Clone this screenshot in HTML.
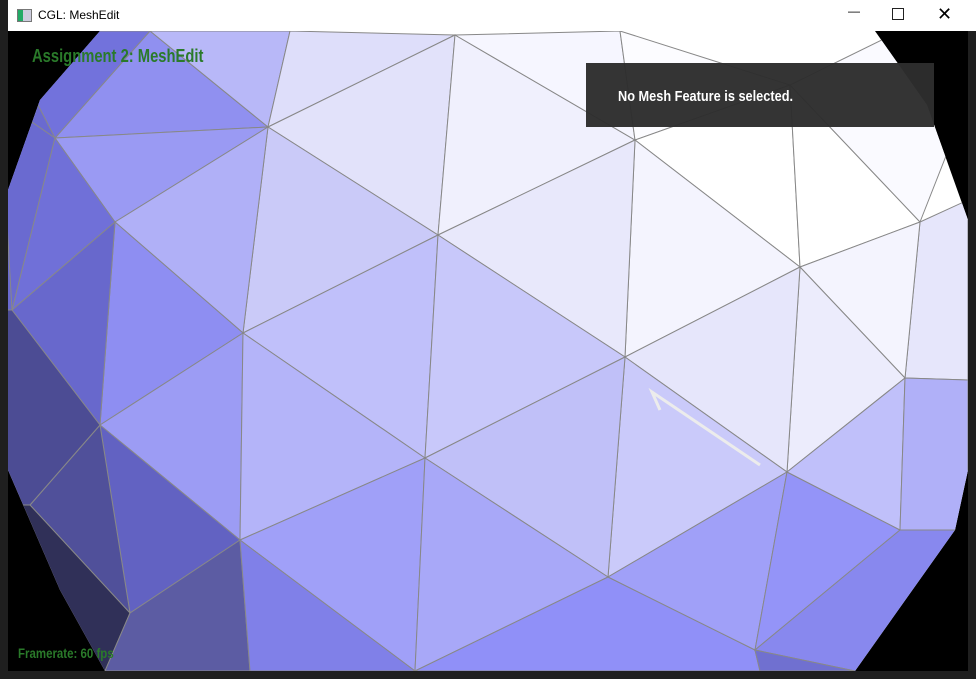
<!DOCTYPE html>
<html><head><style>
html,body{margin:0;padding:0;width:976px;height:679px;overflow:hidden;background:#1f1f1f;font-family:"Liberation Sans",sans-serif}
.tb{position:absolute;left:8px;top:0;width:968px;height:31px;background:#fff}
.tb span{position:absolute;left:30px;top:8px;font-size:12px;color:#000}
.ic{position:absolute;left:9px;top:9px;width:13px;height:11px;border:1px solid #777;background:linear-gradient(90deg,#2a6 0 40%,#ccd 40%)}
.ctl{position:absolute;top:6px;font-size:15px;color:#222}
svg{position:absolute;left:8px;top:31px}
.t{position:absolute;font-weight:bold;color:#2a7a2a;transform-origin:0 0;transform:scaleX(.82);white-space:nowrap}
.box{position:absolute;left:586px;top:63px;width:348px;height:64px;background:rgba(45,45,45,.97)}
.box span{position:absolute;left:32px;top:25px;color:#fff;font-weight:bold;font-size:15px;transform-origin:0 0;transform:scaleX(.85);white-space:nowrap}
</style></head><body>
<div class="tb"><div class="ic"></div><span>CGL: MeshEdit</span>
<span class="ctl" style="left:840px;top:4px">&#8212;</span>
<span class="ctl" style="left:884px;top:8px;width:10px;height:10px;border:1px solid #222;font-size:0"></span>
<span class="ctl" style="left:929px;top:4px;font-size:18px">&#10005;</span></div>
<svg width="960" height="640" viewBox="8 31 960 640">
<rect x="8" y="31" width="960" height="640" fill="#000"/>
<clipPath id="c"><polygon points="100,31 875,31 927,105 968,220 968,470 955,530 855,671 105,671 60,590 8,470 8,190 40,100"/></clipPath>
<g clip-path="url(#c)" stroke="#888" stroke-width="1">
<rect x="8" y="31" width="960" height="640" fill="#fff" stroke="none"/>
<polygon points="0,31 150,31 55,138 12,310 0,320" fill="#6a6ad0" stroke="none"/>
<polygon points="55,138 150,31 268,127" fill="#9090f0"/>
<polygon points="150,31 290,31 268,127" fill="#b8b8f8"/>
<polygon points="268,127 290,31 455,35" fill="#dedefa"/>
<polygon points="55,138 268,127 115,222" fill="#9a9af3"/>
<polygon points="0,31 150,31 55,138" fill="#7272dc"/>
<polygon points="0,100 55,138 12,310" fill="#6a6ad0"/>
<polygon points="268,127 455,35 438,235" fill="#e2e2fa"/>
<polygon points="455,35 635,140 438,235" fill="#f0f0fd"/>
<polygon points="455,35 620,31 635,140" fill="#f6f6ff"/>
<polygon points="635,140 620,31 790,85" fill="#fcfcff"/>
<polygon points="635,140 790,85 800,267" fill="#fff"/>
<polygon points="790,85 920,222 800,267" fill="#fff"/>
<polygon points="790,85 900,31 968,100 920,222" fill="#fafaff"/>
<polygon points="920,222 968,200 968,380 905,378" fill="#e6e6fb"/>
<polygon points="800,267 920,222 905,378" fill="#f4f4fe"/>
<polygon points="635,140 800,267 625,357" fill="#f4f4fe"/>
<polygon points="800,267 905,378 787,472" fill="#ececfc"/>
<polygon points="625,357 800,267 787,472" fill="#e6e6fb"/>
<polygon points="438,235 635,140 625,357" fill="#e8e8fb"/>
<polygon points="268,127 438,235 243,333" fill="#cacaf8"/>
<polygon points="115,222 268,127 243,333" fill="#b0b0f7"/>
<polygon points="115,222 243,333 100,425" fill="#8e8ef2"/>
<polygon points="55,138 115,222 12,310" fill="#7070d8"/>
<polygon points="0,310 12,310 115,222 100,425 0,425" fill="#6868cc"/>
<polygon points="243,333 438,235 425,458" fill="#c0c0fa"/>
<polygon points="438,235 625,357 425,458" fill="#c8c8fa"/>
<polygon points="625,357 787,472 608,577" fill="#cacafa"/>
<polygon points="425,458 625,357 608,577" fill="#c0c0f8"/>
<polygon points="100,425 243,333 240,540" fill="#9c9cf4"/>
<polygon points="243,333 425,458 240,540" fill="#b4b4f9"/>
<polygon points="240,540 425,458 415,671" fill="#a0a0f8"/>
<polygon points="425,458 608,577 415,671" fill="#a8a8f8"/>
<polygon points="100,425 240,540 130,613" fill="#6262c2"/>
<polygon points="30,505 100,425 130,613" fill="#50509a"/>
<polygon points="0,310 12,310 100,425 30,505 0,505" fill="#4c4c94"/>
<polygon points="0,505 30,505 130,613 105,671 0,671" fill="#303058"/>
<polygon points="130,613 240,540 250,671 105,671" fill="#5c5ca3"/>
<polygon points="240,540 415,671 250,671" fill="#8080e8"/>
<polygon points="608,577 755,650 760,671 415,671" fill="#9090f8"/>
<polygon points="787,472 755,650 608,577" fill="#a0a0f8"/>
<polygon points="787,472 900,530 755,650" fill="#9494f8"/>
<polygon points="905,378 900,530 787,472" fill="#c0c0fa"/>
<polygon points="905,378 968,380 968,530 900,530" fill="#b0b0f8"/>
<polygon points="900,530 968,530 968,671 855,671 755,650" fill="#8888ee"/>
<polygon points="755,650 855,671 760,671" fill="#7070d0"/>
</g>
<polyline points="760,465 652,392 660,410" fill="none" stroke="#ececec" stroke-width="3"/>
</svg>
<div class="t" style="left:32px;top:46px;font-size:18px">Assignment 2: MeshEdit</div>
<div class="t" style="left:18px;top:645px;font-size:14px">Framerate: 60 fps</div>
<div class="box"><span>No Mesh Feature is selected.</span></div>
</body></html>
